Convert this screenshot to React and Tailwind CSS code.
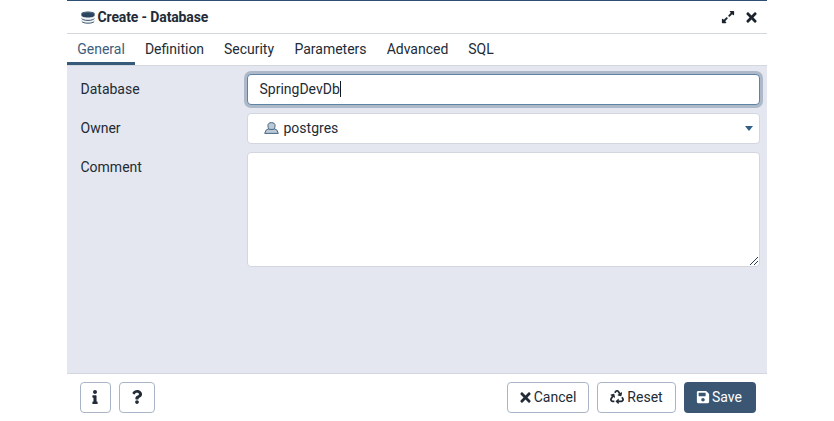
import React from 'react';
import { FaExpandAlt, FaInfo, FaQuestion, FaRecycle, FaSave, FaTimes } from 'react-icons/fa';

const tabs = [
  { name: 'General', width: 'w-[68px]' },
  { name: 'Definition', width: 'w-[79px]' },
  { name: 'Security', width: 'w-[70px]' },
  { name: 'Parameters', width: 'w-[93px]' },
  { name: 'Advanced', width: 'w-[81px]' },
  { name: 'SQL', width: 'w-[46px]' },
];

function DatabaseIcon() {
  return (
    <svg className="h-[13px] w-[14px] shrink-0" viewBox="0 0 14 13">
      <path d="M.4 3.200v6.600c0 1.400 2.900 2.600 6.600 2.600s6.600-1.200 6.600-2.600V3.200" fill="#f0f3f6" />
      <path d="M.8 10.400c.7 1.100 3 1.800 6.200 1.800s5.500-.7 6.200-1.800M.6 7.500c.7 1.200 3.200 1.900 6.400 1.900s5.700-.7 6.400-1.900" fill="none" stroke="#3f566c" strokeWidth="1" />
      <path d="M.4 2.600v1.600c0 1.300 2.900 2.300 6.600 2.300s6.600-1 6.600-2.300V2.600" fill="#2c4359" />
      <ellipse cx="7" cy="2.600" rx="6.600" ry="2.200" fill="#294661" />
      <path d="M1.500 2.500C3 .8 11 .8 12.500 2.500" fill="none" stroke="#8296a8" strokeWidth=".5" />
    </svg>
  );
}

function RoleIcon() {
  return (
    <svg className="h-3 w-[15px] shrink-0" viewBox="0 0 15 12">
      <path d="M.7 11.400 2 8.200 5 6.500h5l3 1.700 1.300 3.200Z" fill="#bcc9d5" stroke="#456788" strokeLinejoin="round" />
      <path d="M7.500.6C5.300.6 3.900 1.700 3.900 3.500c0 1.600.5 3 1.300 3.900h4.600c.8-.9 1.300-2.300 1.300-3.900C11.100 1.700 9.700.6 7.500.6Z" fill="#bcc9d5" stroke="#456788" />
    </svg>
  );
}

function Row({ label, children, className }) {
  return (
    <div className={'flex ' + className}>
      <div className="w-[166.500px] shrink-0 pt-[5px] leading-[21px]">{label}</div>
      {children}
    </div>
  );
}

const button = 'flex h-[31px] items-center justify-center rounded border border-[#a9b5c6] bg-white pb-px';

export default function App() {
  return (
    <div className="flex h-[421px] w-[834px] justify-center overflow-hidden bg-white font-[Roboto,sans-serif] text-sm text-[#222b36]">
      <div className="flex h-full w-[700px] flex-col border-t border-[#2c4f73]">
        <header className="flex h-[33px] shrink-0 items-center border-b border-[#d5d7de] pr-[8px] pl-[14px]">
          <DatabaseIcon />
          <h1 className="ml-[2.500px] font-bold tracking-[-0.130px]">Create - Database</h1>
          <FaExpandAlt className="ml-auto text-[14px] text-[#1b242c]" />
          <FaTimes className="ml-[9px] text-[15px] text-[#1b242c]" />
        </header>

        <nav className="flex h-8 shrink-0 border-b border-[#d5d7df]">
          {tabs.map((tab, i) => (
            <button
              key={tab.name}
              className={
                'flex h-[31px] shrink-0 items-center justify-center border-b-[3px] pt-[2px] ' +
                tab.width +
                (i === 0 ? ' border-[#375a7a] text-[#3d5d7d]' : ' border-transparent')
              }
            >
              {tab.name}
            </button>
          ))}
        </nav>

        <main className="flex h-[308px] shrink-0 flex-col gap-2 border-b border-[#d3d6df] bg-[#e4e7ef] pt-2 pr-[7px] pl-[13.500px]">
          <Row label="Database" className="h-[31px]">
            <div className="flex flex-1 items-center rounded border border-[#5d84a5] bg-white pb-px pl-[11.500px] ring-[3px] ring-[#adb9c9]">
              SpringDevDb
              <span className="h-4 w-px bg-[#111a22]" />
            </div>
          </Row>
          <Row label="Owner" className="h-[31px]">
            <div className="flex flex-1 items-center rounded border border-[#d3d6df] bg-white pr-[6px] pb-px pl-4">
              <RoleIcon />
              <span className="ml-[4.500px]">postgres</span>
              <svg className="ml-auto h-[5px] w-[8px]" viewBox="0 0 8 5">
                <path d="M0 0h8L4 5Z" fill="#315d87" />
              </svg>
            </div>
          </Row>
          <Row label="Comment" className="h-[115px]">
            <div className="flex flex-1 items-end justify-end rounded border border-[#d3d6df] bg-white p-[1px]">
              <svg className="h-2 w-2" viewBox="0 0 8 8">
                <path d="M0 8 8 0M4 8l4-4" stroke="#263f57" strokeWidth="1" />
              </svg>
            </div>
          </Row>
        </main>

        <footer className="flex flex-1 items-start gap-2 pt-2 pr-[11px] pl-[13px]">
          <button className={button + ' w-[31px] pr-px'}><FaInfo className="text-[14px]" /></button>
          <button className={button + ' w-9'}><FaQuestion className="text-[14px]" /></button>
          <button className={button + ' ml-auto w-[82px] gap-px pr-[2px]'}><FaTimes className="text-[15px]" />Cancel</button>
          <button className={button + ' w-[79px] gap-[3px]'}><FaRecycle className="text-[14px]" />Reset</button>
          <button className="flex h-[31px] w-[72px] items-center justify-center gap-[2px] rounded bg-[#3a5673] pr-[2px] pb-px text-white">
            <FaSave className="text-[14px]" />Save
          </button>
        </footer>
      </div>
    </div>
  );
}
